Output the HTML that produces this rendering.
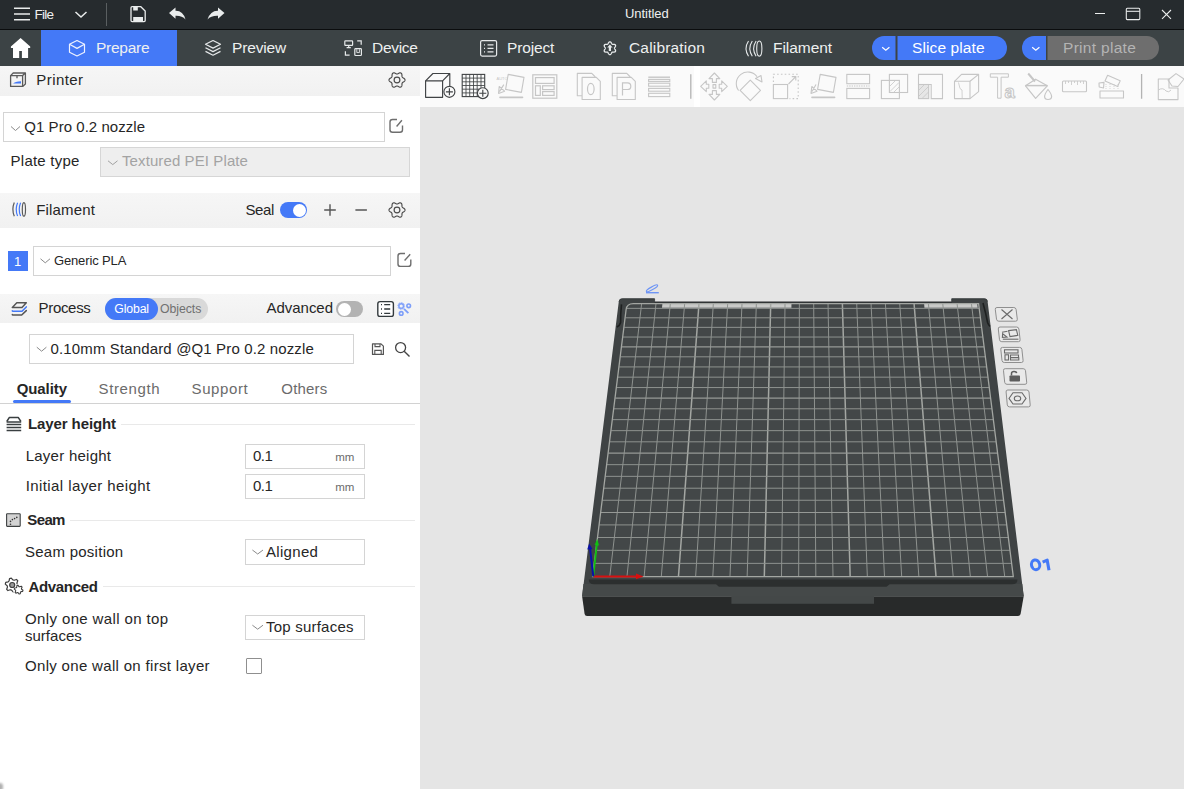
<!DOCTYPE html>
<html><head><meta charset="utf-8">
<style>
*{box-sizing:border-box;margin:0;padding:0}
html,body{width:1184px;height:789px;overflow:hidden;background:#fff;font-family:"Liberation Sans",sans-serif;color:#262626}
.a{position:absolute}
.t{position:absolute;white-space:nowrap}
svg{position:absolute;overflow:visible}
#title{left:0;top:0;width:1184px;height:29px;background:#262b2e}
#tline{left:0;top:29px;width:1184px;height:1px;background:#0b0d0e}
#tabs{left:0;top:30px;width:1184px;height:36px;background:#3c4345}
.tt{position:absolute;top:38px;height:20px;color:#eef0f0;font-size:15px;line-height:20px;white-space:nowrap}
</style></head><body>
<div class="a" style="left:420px;top:66px;width:764px;height:41px;background:#fafafa"></div>
<div class="a" style="left:420px;top:107px;width:764px;height:682px;background:#e5e5e5"></div>
<svg style="left:0;top:0" width="1184" height="789" viewBox="0 0 1184 789">
<path d="M582.1 596.2H1023.7L1020.6 614Q1020 616 1018 616H587Q585 616 584.6 614Z" fill="#282a2a"/>
<path d="M582.1 596.2L618.8 301.5Q619.3 298.6 622.3 298.6H654.6V302H951.7V298.6H984.5Q987.2 298.6 987.6 301.5L1023.7 596.2Z" fill="#3f4344"/>
<path d="M654.6 302.2H951.7" stroke="#2c2f30" stroke-width="1.2"/>
<path d="M619 301.6Q619.3 298.8 622.3 298.8H654.6V302.2" fill="none" stroke="#34383a" stroke-width="0.8"/>
<path d="M951.7 302.2V298.8H984.5Q987.2 298.8 987.5 301.6" fill="none" stroke="#34383a" stroke-width="0.8"/>
<path d="M583.4 584H1022.3L1023.7 596.2H582.1Z" fill="#454949"/>
<path d="M588.8 579.6H1017.4Q1017.6 584.3 1012 584.3H889.7L886.5 586.8H719L716 584.3H594Q588.8 584.3 588.8 579.6Z" fill="#2c2f2f"/>
<rect x="731.4" y="596" width="142.6" height="7.8" fill="#444848"/>
<path d="M592.60 576.60L1013.30 576.60L978.60 303.70L633.30 303.70Q626.80 303.70 626.10 309.70Z" fill="#434748"/>
<path d="M662.01 307.80L791.44 307.80L791.48 304.07L662.39 304.07Z" fill="#c9cac8"/>
<path d="M924.47 307.80L977.68 307.80L977.21 304.07L924.15 304.07Z" fill="#c9cac8"/>
<path d="M609.77 576.60L641.64 303.70" stroke="#8e928f" stroke-width="1.0"/>
<path d="M626.94 576.60L655.98 303.70" stroke="#8e928f" stroke-width="1.0"/>
<path d="M644.11 576.60L670.32 303.70" stroke="#8e928f" stroke-width="1.0"/>
<path d="M661.29 576.60L684.66 303.70" stroke="#8e928f" stroke-width="1.0"/>
<path d="M678.46 576.60L698.99 303.70" stroke="#a4a7a3" stroke-width="1.5"/>
<path d="M695.63 576.60L713.33 303.70" stroke="#8e928f" stroke-width="1.0"/>
<path d="M712.80 576.60L727.67 303.70" stroke="#8e928f" stroke-width="1.0"/>
<path d="M729.97 576.60L742.01 303.70" stroke="#8e928f" stroke-width="1.0"/>
<path d="M747.14 576.60L756.35 303.70" stroke="#8e928f" stroke-width="1.0"/>
<path d="M764.31 576.60L770.69 303.70" stroke="#a4a7a3" stroke-width="1.5"/>
<path d="M781.49 576.60L785.03 303.70" stroke="#8e928f" stroke-width="1.0"/>
<path d="M798.66 576.60L799.37 303.70" stroke="#8e928f" stroke-width="1.0"/>
<path d="M815.83 576.60L813.70 303.70" stroke="#8e928f" stroke-width="1.0"/>
<path d="M833.00 576.60L828.04 303.70" stroke="#8e928f" stroke-width="1.0"/>
<path d="M850.17 576.60L842.38 303.70" stroke="#a4a7a3" stroke-width="1.5"/>
<path d="M867.34 576.60L856.72 303.70" stroke="#8e928f" stroke-width="1.0"/>
<path d="M884.51 576.60L871.06 303.70" stroke="#8e928f" stroke-width="1.0"/>
<path d="M901.69 576.60L885.40 303.70" stroke="#8e928f" stroke-width="1.0"/>
<path d="M918.86 576.60L899.74 303.70" stroke="#8e928f" stroke-width="1.0"/>
<path d="M936.03 576.60L914.08 303.70" stroke="#a4a7a3" stroke-width="1.5"/>
<path d="M953.20 576.60L928.41 303.70" stroke="#8e928f" stroke-width="1.0"/>
<path d="M970.37 576.60L942.75 303.70" stroke="#8e928f" stroke-width="1.0"/>
<path d="M987.54 576.60L957.09 303.70" stroke="#8e928f" stroke-width="1.0"/>
<path d="M1004.71 576.60L971.43 303.70" stroke="#8e928f" stroke-width="1.0"/>
<path d="M594.28 563.37L1011.62 563.37" stroke="#8e928f" stroke-width="1.0"/>
<path d="M595.94 550.34L1009.96 550.34" stroke="#8e928f" stroke-width="1.0"/>
<path d="M597.57 537.53L1008.33 537.53" stroke="#8e928f" stroke-width="1.0"/>
<path d="M599.17 524.91L1006.73 524.91" stroke="#8e928f" stroke-width="1.0"/>
<path d="M600.75 512.49L1005.15 512.49" stroke="#969996" stroke-width="1.15"/>
<path d="M602.31 500.26L1003.59 500.26" stroke="#8e928f" stroke-width="1.0"/>
<path d="M603.84 488.21L1002.06 488.21" stroke="#8e928f" stroke-width="1.0"/>
<path d="M605.35 476.35L1000.55 476.35" stroke="#8e928f" stroke-width="1.0"/>
<path d="M606.83 464.67L999.07 464.67" stroke="#8e928f" stroke-width="1.0"/>
<path d="M608.30 453.16L997.60 453.16" stroke="#969996" stroke-width="1.15"/>
<path d="M609.74 441.82L996.16 441.82" stroke="#8e928f" stroke-width="1.0"/>
<path d="M611.16 430.65L994.74 430.65" stroke="#8e928f" stroke-width="1.0"/>
<path d="M612.56 419.64L993.34 419.64" stroke="#8e928f" stroke-width="1.0"/>
<path d="M613.94 408.79L991.96 408.79" stroke="#8e928f" stroke-width="1.0"/>
<path d="M615.30 398.10L990.60 398.10" stroke="#969996" stroke-width="1.15"/>
<path d="M616.64 387.56L989.26 387.56" stroke="#8e928f" stroke-width="1.0"/>
<path d="M617.96 377.17L987.94 377.17" stroke="#8e928f" stroke-width="1.0"/>
<path d="M619.26 366.93L986.64 366.93" stroke="#8e928f" stroke-width="1.0"/>
<path d="M620.55 356.82L985.35 356.82" stroke="#8e928f" stroke-width="1.0"/>
<path d="M621.81 346.86L984.09 346.86" stroke="#969996" stroke-width="1.15"/>
<path d="M623.06 337.04L982.84 337.04" stroke="#8e928f" stroke-width="1.0"/>
<path d="M624.29 327.35L981.61 327.35" stroke="#8e928f" stroke-width="1.0"/>
<path d="M625.51 317.79L980.39 317.79" stroke="#8e928f" stroke-width="1.0"/>
<path d="M626.71 308.37L979.19 308.37" stroke="#8e928f" stroke-width="1.0"/>
<path d="M592.60 576.60L1013.30 576.60L978.60 303.70L633.30 303.70Q626.80 303.70 626.10 309.70Z" fill="none" stroke="#a3a6a2" stroke-width="1.3"/>
<path d="M593.3 576.4H637" stroke="#d81010" stroke-width="2"/><path d="M636 573.6L643.5 576.4L636 579.2Z" fill="#d81010"/>
<path d="M593.3 576.4L597 543" stroke="#10c010" stroke-width="1.8"/><path d="M594.6 545L597.3 539L599 545.4Z" fill="#10c010"/>
<path d="M593.3 576.4L590 548" stroke="#0a10a8" stroke-width="2"/><path d="M587.2 549.5L589.2 543.5L592.4 549Z" fill="#0a10a8"/>
<path d="M621.5 304.3Q620.5 314 620.6 322.5Q620 325.5 616.8 327" fill="none" stroke="#1e2020" stroke-width="1.6"/>
<path d="M983 303Q986 314 987.6 322.5Q988.5 325.2 990 326.5" fill="none" stroke="#1e2020" stroke-width="1.6"/>
<g fill="none" stroke="#6e95f5" stroke-width="1.2"><ellipse cx="652" cy="288.3" rx="6.4" ry="1.35" transform="rotate(-29 652 288.3)"/><path d="M646 292.7H658.8" stroke-width="1.4"/></g>
<ellipse cx="1035.6" cy="564.8" rx="4.1" ry="4.9" transform="rotate(-14 1035.6 564.8)" fill="none" stroke="#4479f7" stroke-width="3"/><path d="M1042.6 562.2L1047.2 560.2L1049 570.2" fill="none" stroke="#4479f7" stroke-width="3.1" stroke-linejoin="round"/>
<path d="M997 307.5H1013.8000000000001Q1015.8000000000001 307.5 1016.1 309.5L1017.3000000000001 319.2Q1017.6 321.2 1015.6 321.2H998.8Q996.8 321.2 996.5 319.2L995.3 309.5Q995 307.5 997 307.5Z" fill="#e9e9e9" stroke="#8f8f8f" stroke-width="1"/>
<path d="M1000 327H1016.6Q1018.6 327 1018.9 329L1020.1 339.7Q1020.4 341.7 1018.4 341.7H1001.8Q999.8 341.7 999.5 339.7L998.3 329Q998 327 1000 327Z" fill="#e9e9e9" stroke="#8f8f8f" stroke-width="1"/>
<path d="M1002.5 347.4H1019.6Q1021.6 347.4 1021.9 349.4L1023.1 360.5Q1023.4 362.5 1021.4 362.5H1004.3Q1002.3 362.5 1002.0 360.5L1000.8 349.4Q1000.5 347.4 1002.5 347.4Z" fill="#e9e9e9" stroke="#8f8f8f" stroke-width="1"/>
<path d="M1005.2 368.7H1023.2Q1025.2 368.7 1025.5 370.7L1026.7 382.3Q1027 384.3 1025 384.3H1007.0Q1005.0 384.3 1004.7 382.3L1003.5 370.7Q1003.2 368.7 1005.2 368.7Z" fill="#e9e9e9" stroke="#8f8f8f" stroke-width="1"/>
<path d="M1007.8 390H1026.7Q1028.7 390 1029.0 392L1030.2 404.9Q1030.5 406.9 1028.5 406.9H1009.5999999999999Q1007.5999999999999 406.9 1007.3 404.9L1006.0999999999999 392Q1005.8 390 1007.8 390Z" fill="#e9e9e9" stroke="#8f8f8f" stroke-width="1"/>
<path d="M1001.5 309.5L1012.5 319M1012.5 309.5L1001.5 319" fill="none" stroke="#6a6a6a" stroke-width="1.1"/>
<path d="M1002.8 339.2H1018.4" fill="none" stroke="#6a6a6a" stroke-width="1.1" stroke-width="1.6"/><path d="M1008.6 330.6L1016.4 329.6L1017.8 335.4L1010 336.6Z" fill="none" stroke="#6a6a6a" stroke-width="1.1"/><path d="M1002 332.2L1007.5 331.2M1002.6 333.8L1007 337L1002.4 337.4Z" fill="none" stroke="#6a6a6a" stroke-width="1.1" stroke-width="1"/>
<rect x="1004.5" y="349.8" width="13.5" height="3.2" fill="none" stroke="#6a6a6a" stroke-width="1.1"/><rect x="1005" y="354.8" width="3.5" height="5.2" fill="none" stroke="#6a6a6a" stroke-width="1.1"/><path d="M1010.5 355H1018.5V357.5H1010.5ZM1010.5 357.8H1018.8V360H1010.5Z" fill="none" stroke="#6a6a6a" stroke-width="1.1"/>
<rect x="1009.5" y="375.5" width="10.5" height="6" rx="0.8" fill="#5c5c5c"/><path d="M1011.5 375.5V373.6Q1011.5 371.5 1014 371.5Q1016.4 371.5 1016.6 373.2" fill="none" stroke="#5c5c5c" stroke-width="1.5"/>
<path d="M1013 392.8L1022 392.8L1026 398.4L1022 404L1013 404L1009 398.4Z" fill="none" stroke="#6a6a6a" stroke-width="1.1"/><ellipse cx="1017.5" cy="398.4" rx="3.2" ry="2.4" fill="none" stroke="#6a6a6a" stroke-width="1.1"/>
</svg><div class="a" style="left:694px;top:66px;width:6px;height:41px;background:#ffffff"></div>
<svg style="left:0;top:66px" width="1184" height="41" viewBox="0 66 1184 41">
<g fill="none" stroke="#404345" stroke-width="1.15" stroke-linejoin="round"><path d="M425.6 80.8H442.6V97.3H425.6Z"/><path d="M425.6 80.8L432.9 73.5H449.8L442.6 80.8M449.8 73.5V86"/><circle cx="449.4" cy="91.8" r="5.5" fill="#fafafa"/><path d="M445.9 91.8H452.9M449.4 88.3V95.3"/></g>
<g fill="none" stroke="#404345" stroke-width="0.85"><rect x="462.2" y="74.4" width="22.5" height="22.2" stroke-width="1.1"/><path d="M466 74.4V96.6M469.7 74.4V96.6M473.5 74.4V96.6M477.2 74.4V96.6M481 74.4V96.6M462.2 78.1H484.7M462.2 81.8H484.7M462.2 85.5H484.7M462.2 89.2H484.7M462.2 92.9H484.7"/><circle cx="482.8" cy="93.2" r="5.4" fill="#fafafa" stroke-width="1.15"/><path d="M479.3 93.2H486.3M482.8 89.7V96.7" stroke-width="1.15"/></g>
<g fill="none" stroke="#c6c6c6" stroke-width="1.1" stroke-linejoin="round"><path d="M508.2 74.4L524 77.4L521.4 92.4L505.6 89.4Z"/><path d="M503.8 84.6L499.5 91.6M498.6 93.4L499.2 86.5L504.6 91.2Z"/><path d="M500 97.4H522.5" stroke-width="1.6" stroke-linecap="round"/></g>
<text x="496.5" y="80.2" font-family="Liberation Sans" font-size="4" fill="#c6c6c6">AUTO</text>
<g fill="none" stroke="#c6c6c6" stroke-width="1.2"><rect x="532.8" y="74.8" width="24" height="23.4"/><rect x="535.5" y="77.6" width="18.6" height="5.8"/><rect x="535.5" y="85.8" width="4.8" height="9.6"/><rect x="542.6" y="85.8" width="11.5" height="3.8"/><rect x="542.6" y="91.6" width="11.5" height="3.8"/></g>
<g fill="none" stroke="#c6c6c6" stroke-width="1.1" stroke-linejoin="round"><path d="M582.0 95.8H577.3 V73.4H591.8L595.3 77"/><path d="M582.0999999999999 77.4H596.3L600.3 81.4V99.5H582.0999999999999Z" fill="#fafafa"/></g>
<g fill="none" stroke="#c6c6c6" stroke-width="1.1" stroke-linejoin="round"><path d="M617.0 95.8H612.3 V73.4H626.8L630.3 77"/><path d="M617.0999999999999 77.4H631.3L635.3 81.4V99.5H617.0999999999999Z" fill="#fafafa"/></g>
<ellipse cx="590.8" cy="89" rx="3.3" ry="5.6" fill="none" stroke="#c6c6c6" stroke-width="1.2"/>
<path d="M622.5 95.6V82.8H627.5Q630.8 82.8 630.8 86.2Q630.8 89.5 627.5 89.5H622.5" fill="none" stroke="#c6c6c6" stroke-width="1.2"/>
<g fill="none" stroke="#c6c6c6" stroke-width="1.1"><path d="M648.3 77.2H670" stroke-width="1.4"/><rect x="648.6" y="79.4" width="21.2" height="2"/><rect x="648.6" y="83.2" width="21.2" height="3"/><rect x="648.6" y="88.4" width="21.2" height="2.8"/><rect x="648.6" y="93.3" width="21.2" height="3.3"/></g>
<path d="M690.8 74.2V98.7M1141.6 74V98.8" stroke="#b3b3b3" stroke-width="1.3"/>
<g fill="none" stroke="#c6c6c6" stroke-width="1.1" stroke-linejoin="round"><path d="M714.4 73L709 78.6H712.4V82.4H716.4V78.6H719.8Z"/><path d="M714.4 100L709 94.4H712.4V90.6H716.4V94.4H719.8Z"/><path d="M700.7 86.3L706.3 80.9V84.3H708.8V88.3H706.3V91.7Z"/><path d="M727.3 86.3L721.7 80.9V84.3H719.2V88.3H721.7V91.7Z"/><rect x="713" y="84.6" width="2.8" height="3.5"/></g>
<g fill="none" stroke="#c6c6c6" stroke-width="1.1" stroke-linejoin="round"><path d="M738.6 90.5A11 11 0 0 1 757 76.6"/><path d="M750.3 80.2L760.5 90.4L750.3 100.6L740.1 90.4Z"/><path d="M755.5 78.5L761 75.6L762 81.9Z"/></g>
<g fill="none" stroke="#c6c6c6" stroke-width="1.1"><rect x="773.4" y="84.5" width="14.2" height="14.1"/><path d="M773.4 82V74.3H798.2V98.6H789.5" stroke-dasharray="1.6 2.2"/><path d="M788.5 84L795.8 76.7M791.8 76.6H795.8V80.6"/></g>
<g fill="none" stroke="#c6c6c6" stroke-width="1.1" stroke-linejoin="round"><path d="M820.2 74.4L836 77.4L833.4 92.4L817.6 89.4Z"/><path d="M816 84.6L812 91.6M811 93.4L811.8 86.5L817 91.2Z"/><path d="M812 97.4H834.6" stroke-width="1.6" stroke-linecap="round"/></g>
<g fill="none" stroke="#c6c6c6" stroke-width="1.1"><rect x="846.8" y="74.4" width="22.8" height="9.3"/><rect x="846.8" y="88.4" width="22.8" height="10.2"/><path d="M846.8 86H869.6" stroke-dasharray="1.4 1"/></g>
<g fill="none" stroke="#c6c6c6" stroke-width="1.1"><rect x="881.4" y="80.4" width="18" height="18.2"/><rect x="889.4" y="74.4" width="18.2" height="18.1"/><path d="M890 86L895 81M890 91.5L899 82.5M894 92L899 87" stroke-width="0.8"/></g>
<g fill="none" stroke="#c6c6c6" stroke-width="1.1"><path d="M918.5 74.4H942.5V98.6H931.2V84.5H918.5Z"/><rect x="918.5" y="84.5" width="10.2" height="14.1" fill="#e6e6e6"/><path d="M919 90L924 85M919 96L928 87M922.5 98L928.5 92" stroke-width="0.8"/></g>
<g fill="none" stroke="#c6c6c6" stroke-width="1.1" stroke-linejoin="round"><path d="M954.5 81.3H970V98.6H954.5Z"/><path d="M954.5 81.3L961.5 74.4H978.6L970 81.3M978.6 74.4V91.6L970 98.6"/><path d="M958.5 82.5L960 88.5L962 90L962.2 98" stroke-width="0.8"/></g>
<path d="M990.3 73.8H1008.4V77.2H1001.1V98.2H997.6V77.2H990.3Z" fill="none" stroke="#c6c6c6" stroke-width="1"/>
<text x="1004.4" y="98.4" font-family="Liberation Sans" font-weight="bold" font-size="18.5" fill="#fafafa" stroke="#c6c6c6" stroke-width="1">a</text>
<g fill="none" stroke="#c6c6c6" stroke-width="1.2" stroke-linejoin="round"><path d="M1035.6 79.2L1047.3 85.8L1035.6 98.3L1025.5 85.8Z"/><path d="M1025.5 85.6H1047.4" stroke-width="1.5"/><path d="M1028.2 73.5L1035 81.5" stroke-width="2"/><path d="M1048 89.5Q1044.6 94 1044.6 96.5Q1044.6 99.5 1048 99.5Q1051.6 99.5 1051.6 96.5Q1051.6 94 1048 89.5Z"/></g>
<g fill="none" stroke="#c6c6c6" stroke-width="1.1"><rect x="1062.5" y="81" width="24" height="10.8" rx="1"/><path d="M1065.5 81V84M1068.5 81V83M1071.5 81V85M1074.5 81V83M1077.5 81V85M1080.5 81V83M1083.5 81V84" stroke-width="0.8"/></g>
<g fill="none" stroke="#c6c6c6" stroke-width="1.1" stroke-linejoin="round"><rect x="1100" y="91" width="23.5" height="7"/><path d="M1107.6 75.3L1120.2 80.8L1117.6 86.4L1105 81Z"/><path d="M1099 83L1104 82.4L1103.5 88L1099.2 87Z"/><path d="M1106 84V90M1110 84V90M1114 84V90M1118 84V90" stroke-width="0.7" stroke-dasharray="1 1"/></g>
<g fill="none" stroke="#c6c6c6" stroke-width="1.1" stroke-linejoin="round"><path d="M1158.3 79H1169V88H1178V99.6H1158.3Z"/><path d="M1168 80L1176 73.6L1184 79L1178 86.5L1172 86Z"/><path d="M1158.3 90Q1163 87 1166 91Q1169 93 1171 90" stroke-width="0.9"/></g>
</svg><!-- title bar -->
<div id="title" class="a"></div>
<div id="tline" class="a"></div>
<svg style="left:0;top:0" width="240" height="29" viewBox="0 0 240 29">
  <g stroke="#e9ecec" stroke-width="1.6" fill="none">
    <path d="M14 8.2H30M14 14H30M14 19.8H30"/>
    <path d="M75.5 12L81 17L86.5 12" stroke-width="1.5"/>
  </g>
  <path d="M106.5 3V26" stroke="#5a5f61" stroke-width="1"/>
  <!-- save -->
  <path d="M131 7.8Q131 6.7 132.1 6.7H140.8L145.2 11.1V20.6Q145.2 21.7 144.1 21.7H132.1Q131 21.7 131 20.6Z" fill="none" stroke="#e9ecec" stroke-width="1.3"/>
  <rect x="133.2" y="6.7" width="4.6" height="3.8" fill="#e9ecec"/>
  <rect x="133.2" y="17" width="9.8" height="4.5" fill="#e9ecec"/>
  <!-- undo -->
  <path d="M169 13L175.5 7.5V10.8Q183 10.5 185.5 19.5Q182 15.5 175.5 15.8V18.8Z" fill="#e9ecec"/>
  <!-- redo -->
  <path d="M224.5 13L218 7.5V10.8Q210.5 10.5 207.5 19.5Q211 15.5 218 15.8V18.8Z" fill="#e9ecec"/>
</svg>
<div class="a" style="left:34.5px;top:7px;font-size:13.5px;line-height:16px;color:#eef0f0;letter-spacing:-0.75px">File</div>
<div class="a" style="left:625px;top:6px;font-size:13px;line-height:16px;color:#eef0f0;letter-spacing:-0.05px">Untitled</div>
<svg style="left:1080px;top:0" width="104" height="29" viewBox="1080 0 104 29">
  <g stroke="#eceeee" stroke-width="1.05" fill="none">
    <path d="M1095 13.5H1105"/>
    <rect x="1126.3" y="8.3" width="13.5" height="11.3" rx="1"/>
    <path d="M1126.3 11.3H1139.8"/>
    <path d="M1162 10L1171 18.8M1171 10L1162 18.8"/>
  </g>
</svg>

<!-- tabs bar -->
<div id="tabs" class="a"></div>
<div class="a" style="left:41px;top:30px;width:136px;height:36px;background:#4479f7"></div>
<svg style="left:0;top:30px" width="1184" height="36" viewBox="0 30 1184 36">
  <!-- home -->
  <path d="M20.6 38L10.9 46.6V48H13V58H19.2V51.1H21.9V58H28.1V48H30.2V46.6Z" fill="#fff"/>
  <!-- prepare cube -->
  <g fill="none" stroke="#eef2ff" stroke-width="1.2" stroke-linejoin="round">
    <path d="M77 40.5L84.5 44.3V52.2L77 56L69.5 52.2V44.3Z"/>
    <path d="M69.5 44.3L77 48.4L84.5 44.3"/>
  </g>
  <!-- preview layers -->
  <g fill="none" stroke="#e6e9ea" stroke-width="1.2" stroke-linejoin="round">
    <path d="M213 40.5L220.5 44.3L213 48.1L205.5 44.3Z"/>
    <path d="M205.5 47.8L213 51.6L220.5 47.8"/>
    <path d="M205.5 51.4L213 55.2L220.5 51.4"/>
  </g>
  <!-- device -->
  <g fill="none" stroke="#e6e9ea" stroke-width="1.2">
    <rect x="344.8" y="40.8" width="7.8" height="4.6" rx="0.6"/>
    <path d="M348.7 45.4V47.4M346.6 47.6H350.8"/>
    <path d="M357.2 40.8H361.2V44.8M345.4 51.2V55.2H349.6"/>
    <rect x="354.8" y="48.6" width="6.6" height="6.9" rx="0.8"/>
    <path d="M356.8 49.2V52.6H359.4V49.2" stroke-width="0.9"/>
  </g>
  <!-- project -->
  <g fill="none" stroke="#e6e9ea" stroke-width="1.2">
    <rect x="480.6" y="40.6" width="16" height="15.5" rx="1.5"/>
    <path d="M484 44.8H485M487.5 44.8H493.5M484 48.3H485M487.5 48.3H493.5M484 51.8H485M487.5 51.8H493.5"/>
  </g>
  <!-- calibration -->
  <path d="M614.50 48.20 L614.54 48.44 L614.65 48.70 L614.81 48.98 L615.01 49.29 L615.21 49.62 L615.40 49.99 L615.53 50.36 L615.59 50.73 L615.56 51.09 L615.44 51.40 L615.23 51.66 L614.94 51.86 L614.59 51.99 L614.19 52.07 L613.79 52.09 L613.39 52.08 L613.03 52.06 L612.70 52.06 L612.43 52.09 L612.20 52.18 L612.01 52.34 L611.84 52.56 L611.68 52.84 L611.51 53.17 L611.32 53.51 L611.10 53.85 L610.84 54.15 L610.55 54.39 L610.23 54.55 L609.90 54.60 L609.57 54.55 L609.25 54.39 L608.96 54.15 L608.70 53.85 L608.48 53.51 L608.29 53.17 L608.12 52.84 L607.96 52.56 L607.79 52.34 L607.60 52.18 L607.37 52.09 L607.10 52.06 L606.77 52.06 L606.41 52.08 L606.01 52.09 L605.61 52.07 L605.21 51.99 L604.86 51.86 L604.57 51.66 L604.36 51.40 L604.24 51.09 L604.21 50.73 L604.27 50.36 L604.40 49.99 L604.59 49.62 L604.79 49.29 L604.99 48.98 L605.15 48.70 L605.26 48.44 L605.30 48.20 L605.26 47.96 L605.15 47.70 L604.99 47.42 L604.79 47.11 L604.59 46.78 L604.40 46.41 L604.27 46.04 L604.21 45.67 L604.24 45.31 L604.36 45.00 L604.57 44.74 L604.86 44.54 L605.21 44.41 L605.61 44.33 L606.01 44.31 L606.41 44.32 L606.77 44.34 L607.10 44.34 L607.37 44.31 L607.60 44.22 L607.79 44.06 L607.96 43.84 L608.12 43.56 L608.29 43.23 L608.48 42.89 L608.70 42.55 L608.96 42.25 L609.25 42.01 L609.57 41.85 L609.90 41.80 L610.23 41.85 L610.55 42.01 L610.84 42.25 L611.10 42.55 L611.32 42.89 L611.51 43.23 L611.68 43.56 L611.84 43.84 L612.01 44.06 L612.20 44.22 L612.43 44.31 L612.70 44.34 L613.03 44.34 L613.39 44.32 L613.79 44.31 L614.19 44.33 L614.59 44.41 L614.94 44.54 L615.23 44.74 L615.44 45.00 L615.56 45.31 L615.59 45.67 L615.53 46.04 L615.40 46.41 L615.21 46.78 L615.01 47.11 L614.81 47.42 L614.65 47.70 L614.54 47.96Z" fill="none" stroke="#e6e9ea" stroke-width="1.3"/>
  <path d="M609.9 44.6L612.6 47.6H611V51H608.8V47.6H607.2Z" fill="#e6e9ea"/>
  <!-- filament -->
  <g fill="none" stroke="#e6e9ea" stroke-width="1.1">
    <path d="M748.5 41Q743.6 48.5 748.5 56.2"/>
    <path d="M752.3 41Q747.4 48.5 752.3 56.2"/>
    <path d="M756.1 41Q751.2 48.5 756.1 56.2"/>
    <ellipse cx="759.3" cy="48.6" rx="2.6" ry="7.6"/>
  </g>
  <!-- slice button -->
  <path d="M884 36H895.5V60H884A12 12 0 0 1 884 36Z" fill="#4479f7"/>
  <path d="M897.5 36H995A12 12 0 0 1 995 60H897.5Z" fill="#4479f7"/>
  <path d="M882.2 47.2L885.8 50.2L889.4 47.2" fill="none" stroke="#fff" stroke-width="1.2"/>
  <path d="M1034 36H1046V60H1034A12 12 0 0 1 1034 36Z" fill="#4479f7"/>
  <path d="M1047.5 36H1147A12 12 0 0 1 1147 60H1047.5Z" fill="#6e6e6e"/>
  <path d="M1032.2 47.2L1035.8 50.2L1039.4 47.2" fill="none" stroke="#fff" stroke-width="1.2"/>
</svg>
<div class="tt" style="left:96px;font-size:15.5px;top:37.8px;letter-spacing:-0.25px">Prepare</div>
<div class="tt" style="left:232px;font-size:15.5px;top:37.8px;letter-spacing:-0.16px">Preview</div>
<div class="tt" style="left:372px;font-size:15.5px;top:37.8px;letter-spacing:-0.31px">Device</div>
<div class="tt" style="left:507px;font-size:15.5px;top:37.8px;letter-spacing:-0.14px">Project</div>
<div class="tt" style="left:629px;font-size:15.5px;top:37.8px;letter-spacing:0.17px">Calibration</div>
<div class="tt" style="left:773px;font-size:15.5px;top:37.8px;letter-spacing:-0.05px">Filament</div>
<div class="tt" style="left:912px;color:#fff;font-size:15.5px;letter-spacing:0.1px">Slice plate</div>
<div class="tt" style="left:1063px;color:#b4b4b4;font-size:15.5px;letter-spacing:0.3px">Print plate</div>


<div class="a" style="left:0px;top:66px;width:420px;height:723px;background:#fff;"></div>
<div class="a" style="left:0px;top:66px;width:420px;height:30px;background:linear-gradient(#f6f6f6,#f1f1f1);"></div>
<div class="a" style="left:0px;top:192.6px;width:420px;height:35.400000000000006px;background:linear-gradient(#f6f6f6,#f1f1f1);"></div>
<div class="a" style="left:0px;top:294px;width:420px;height:29px;background:linear-gradient(#f6f6f6,#f1f1f1);"></div>
<div class="t" style="left:36.3px;top:72.00px;font-size:15px;line-height:15px;color:#262626;letter-spacing:0.44px;">Printer</div>
<div class="a" style="left:3px;top:112px;width:382px;height:30px;background:#fff;border:1px solid #d4d4d4;"></div>
<div class="t" style="left:24.3px;top:119.20px;font-size:15px;line-height:15px;color:#262626;letter-spacing:0.04px;">Q1 Pro 0.2 nozzle</div>
<div class="t" style="left:10.6px;top:153.30px;font-size:15px;line-height:15px;color:#262626;letter-spacing:0.23px;">Plate type</div>
<div class="a" style="left:100px;top:147px;width:310px;height:30px;background:#eeeeee;border:1px solid #d6d6d6;"></div>
<div class="t" style="left:122px;top:153.30px;font-size:15px;line-height:15px;color:#a3a3a3;letter-spacing:0.1px;">Textured PEI Plate</div>
<div class="t" style="left:36.2px;top:202.30px;font-size:15px;line-height:15px;color:#262626;letter-spacing:0.16px;">Filament</div>
<div class="t" style="left:245.5px;top:202.30px;font-size:15px;line-height:15px;color:#262626;letter-spacing:-0.4px;">Seal</div>
<div class="a" style="left:280px;top:202px;width:27px;height:16px;background:#4479f7;border-radius:8px;"></div>
<div class="a" style="left:292.5px;top:203.5px;width:13.0px;height:13.0px;background:#fff;border-radius:7px;"></div>
<div class="a" style="left:8px;top:251px;width:20px;height:20px;background:#4479f7;"></div>
<div class="t" style="left:14px;top:254.50px;font-size:13px;line-height:13px;color:#fff;letter-spacing:0px;">1</div>
<div class="a" style="left:33px;top:246px;width:358px;height:30px;background:#fff;border:1px solid #d4d4d4;"></div>
<div class="t" style="left:53.9px;top:253.70px;font-size:13px;line-height:13px;color:#262626;letter-spacing:-0.12px;">Generic PLA</div>
<div class="t" style="left:38.5px;top:300.00px;font-size:15px;line-height:15px;color:#262626;letter-spacing:-0.31px;">Process</div>
<div class="a" style="left:105px;top:298px;width:102.5px;height:21.5px;background:#d9d9d9;border-radius:11px;"></div>
<div class="a" style="left:105px;top:298px;width:52.599999999999994px;height:21.5px;background:#4479f7;border-radius:11px;"></div>
<div class="t" style="left:114.3px;top:302.89px;font-size:12.3px;line-height:12.3px;color:#fff;letter-spacing:-0.16px;">Global</div>
<div class="t" style="left:160px;top:302.89px;font-size:12.3px;line-height:12.3px;color:#707070;letter-spacing:-0.05px;">Objects</div>
<div class="t" style="left:266.5px;top:300.00px;font-size:15px;line-height:15px;color:#262626;letter-spacing:-0.03px;">Advanced</div>
<div class="a" style="left:336px;top:301px;width:27px;height:16px;background:#b3b3b3;border-radius:8px;"></div>
<div class="a" style="left:337.5px;top:302.5px;width:13.0px;height:13.0px;background:#fff;border-radius:7px;"></div>
<div class="a" style="left:29px;top:334px;width:325px;height:30px;background:#fff;border:1px solid #d4d4d4;"></div>
<div class="t" style="left:50.5px;top:341.10px;font-size:15px;line-height:15px;color:#262626;letter-spacing:0.14px;">0.10mm Standard @Q1 Pro 0.2 nozzle</div>
<div class="t" style="left:16.7px;top:381.00px;font-size:15px;line-height:15px;color:#262626;font-weight:bold;letter-spacing:-0.08px;">Quality</div>
<div class="t" style="left:98.6px;top:381.00px;font-size:15px;line-height:15px;color:#6b6b6b;letter-spacing:0.62px;">Strength</div>
<div class="t" style="left:191.6px;top:381.00px;font-size:15px;line-height:15px;color:#6b6b6b;letter-spacing:0.59px;">Support</div>
<div class="t" style="left:281.3px;top:381.00px;font-size:15px;line-height:15px;color:#6b6b6b;letter-spacing:0.18px;">Others</div>
<div class="a" style="left:13px;top:400px;width:58px;height:3px;background:#4479f7;border-radius:1.5px;"></div>
<div class="a" style="left:0px;top:403px;width:420px;height:1px;background:#d2d2d2;"></div>
<div class="t" style="left:28px;top:416.30px;font-size:15px;line-height:15px;color:#262626;font-weight:bold;letter-spacing:-0.1px;">Layer height</div>
<div class="a" style="left:121px;top:424px;width:294px;height:1px;background:#e9e9e9;"></div>
<div class="t" style="left:25.7px;top:448.30px;font-size:15px;line-height:15px;color:#262626;letter-spacing:0.25px;">Layer height</div>
<div class="a" style="left:245px;top:444px;width:120px;height:25px;background:#fff;border:1px solid #d4d4d4;"></div>
<div class="t" style="left:253px;top:448.30px;font-size:15px;line-height:15px;color:#262626;letter-spacing:-0.49px;">0.1</div>
<div class="t" style="left:335.2px;top:452.27px;font-size:11.5px;line-height:11.5px;color:#6b6b6b;letter-spacing:0px;">mm</div>
<div class="t" style="left:25.7px;top:478.10px;font-size:15px;line-height:15px;color:#262626;letter-spacing:0.41px;">Initial layer height</div>
<div class="a" style="left:245px;top:473.5px;width:120px;height:25.0px;background:#fff;border:1px solid #d4d4d4;"></div>
<div class="t" style="left:253px;top:478.10px;font-size:15px;line-height:15px;color:#262626;letter-spacing:-0.49px;">0.1</div>
<div class="t" style="left:335.2px;top:482.07px;font-size:11.5px;line-height:11.5px;color:#6b6b6b;letter-spacing:0px;">mm</div>
<div class="t" style="left:27.3px;top:512.20px;font-size:15px;line-height:15px;color:#262626;font-weight:bold;letter-spacing:-0.63px;">Seam</div>
<div class="a" style="left:70px;top:520px;width:345px;height:1px;background:#e9e9e9;"></div>
<div class="t" style="left:25px;top:544.10px;font-size:15px;line-height:15px;color:#262626;letter-spacing:0.26px;">Seam position</div>
<div class="a" style="left:245px;top:539px;width:120px;height:25.5px;background:#fff;border:1px solid #d4d4d4;"></div>
<div class="t" style="left:266px;top:544.10px;font-size:15px;line-height:15px;color:#262626;letter-spacing:0.31px;">Aligned</div>
<div class="t" style="left:28.4px;top:578.60px;font-size:15px;line-height:15px;color:#262626;font-weight:bold;letter-spacing:-0.31px;">Advanced</div>
<div class="a" style="left:103px;top:586px;width:312px;height:1px;background:#e9e9e9;"></div>
<div class="t" style="left:25px;top:610.50px;font-size:15px;line-height:15px;color:#262626;letter-spacing:0.38px;">Only one wall on top</div>
<div class="t" style="left:25px;top:627.50px;font-size:15px;line-height:15px;color:#262626;letter-spacing:0.01px;">surfaces</div>
<div class="a" style="left:245px;top:614.5px;width:120px;height:25.0px;background:#fff;border:1px solid #d4d4d4;"></div>
<div class="t" style="left:266px;top:619.30px;font-size:15px;line-height:15px;color:#262626;letter-spacing:0.22px;">Top surfaces</div>
<div class="t" style="left:25px;top:658.40px;font-size:15px;line-height:15px;color:#262626;letter-spacing:0.32px;">Only one wall on first layer</div>
<div class="a" style="left:246px;top:658px;width:16px;height:16px;background:#fff;border:1px solid #8f8f8f;border-radius:1px;"></div>
<div class="a" style="left:-3px;top:783px;width:6px;height:8px;border-radius:3px;background:#b0b0b0;filter:blur(1px)"></div><!-- blob --><svg style="left:0;top:0" width="1184" height="789" viewBox="0 0 1184 789">
<g fill="none" stroke="#5a5a5a" stroke-width="1.3" stroke-linejoin="round"><path d="M10.6 75.6H22.6V86.4H10.6Z"/><path d="M10.6 75.6L13.2 73H25.4V84L22.6 86.4M22.6 75.6L25.4 73"/><path d="M17 75.6V78.2"/></g>
<path d="M12.8 83.8Q15 81.3 21 81.3V83.4H12.8Z" fill="#4479f7"/>
<path d="M405.00 80.00 L404.94 80.42 L404.77 80.82 L404.49 81.19 L404.15 81.52 L403.76 81.81 L403.36 82.07 L402.99 82.30 L402.66 82.52 L402.39 82.75 L402.20 83.00 L402.07 83.29 L402.01 83.64 L401.98 84.04 L401.97 84.48 L401.95 84.95 L401.89 85.43 L401.78 85.90 L401.59 86.32 L401.33 86.67 L401.00 86.93 L400.61 87.08 L400.18 87.13 L399.72 87.08 L399.26 86.95 L398.81 86.76 L398.39 86.54 L398.00 86.33 L397.65 86.16 L397.32 86.04 L397.00 86.00 L396.68 86.04 L396.35 86.16 L396.00 86.33 L395.61 86.54 L395.19 86.76 L394.74 86.95 L394.28 87.08 L393.82 87.13 L393.39 87.08 L393.00 86.93 L392.67 86.67 L392.41 86.32 L392.22 85.90 L392.11 85.43 L392.05 84.95 L392.03 84.48 L392.02 84.04 L391.99 83.64 L391.93 83.29 L391.80 83.00 L391.61 82.75 L391.34 82.52 L391.01 82.30 L390.64 82.07 L390.24 81.81 L389.85 81.52 L389.51 81.19 L389.23 80.82 L389.06 80.42 L389.00 80.00 L389.06 79.58 L389.23 79.18 L389.51 78.81 L389.85 78.48 L390.24 78.19 L390.64 77.93 L391.01 77.70 L391.34 77.48 L391.61 77.25 L391.80 77.00 L391.93 76.71 L391.99 76.36 L392.02 75.96 L392.03 75.52 L392.05 75.05 L392.11 74.57 L392.22 74.10 L392.41 73.68 L392.67 73.33 L393.00 73.07 L393.39 72.92 L393.82 72.87 L394.28 72.92 L394.74 73.05 L395.19 73.24 L395.61 73.46 L396.00 73.67 L396.35 73.84 L396.68 73.96 L397.00 74.00 L397.32 73.96 L397.65 73.84 L398.00 73.67 L398.39 73.46 L398.81 73.24 L399.26 73.05 L399.72 72.92 L400.18 72.87 L400.61 72.92 L401.00 73.07 L401.33 73.33 L401.59 73.68 L401.78 74.10 L401.89 74.57 L401.95 75.05 L401.97 75.52 L401.98 75.96 L402.01 76.36 L402.07 76.71 L402.20 77.00 L402.39 77.25 L402.66 77.48 L402.99 77.70 L403.36 77.93 L403.76 78.19 L404.15 78.48 L404.49 78.81 L404.77 79.18 L404.94 79.58Z" fill="none" stroke="#4a4a4a" stroke-width="1.15" stroke-linejoin="round"/><circle cx="397" cy="80" r="2.9" fill="none" stroke="#4a4a4a" stroke-width="1.15"/>
<path d="M397 119.5H392.5Q390 119.5 390 122.0V129.7Q390 132.2 392.5 132.2H400.0Q402.5 132.2 402.5 129.7V125.5" fill="none" stroke="#6e6e6e" stroke-width="1.4"/><path d="M396.6 126.5 L401.9 120.3" stroke="#6e6e6e" stroke-width="1.4"/>
<path d="M11 126.5L15.5 130.5L20 126.5" fill="none" stroke="#8a8a8a" stroke-width="1"/>
<path d="M108 160.8L112.75 164.60000000000002L117.5 160.8" fill="none" stroke="#a0a0a0" stroke-width="1"/>
<g fill="none" stroke-width="1.2"><path d="M14.3 202.6Q11.4 209.5 14.3 216.2" stroke="#5a5a5a"/><path d="M17.6 202.8Q14.8 209.5 17.6 216" stroke="#4479f7"/><path d="M20.6 202.8Q17.8 209.5 20.6 216" stroke="#4479f7"/><ellipse cx="23.9" cy="209.4" rx="1.6" ry="6.8" stroke="#5a5a5a"/></g>
<path d="M324.2 210H335.8M330 204.2V215.8M355.4 210H366.9" stroke="#555" stroke-width="1.4"/>
<path d="M405.00 210.00 L404.94 210.42 L404.77 210.82 L404.49 211.19 L404.15 211.52 L403.76 211.81 L403.36 212.07 L402.99 212.30 L402.66 212.52 L402.39 212.75 L402.20 213.00 L402.07 213.29 L402.01 213.64 L401.98 214.04 L401.97 214.48 L401.95 214.95 L401.89 215.43 L401.78 215.90 L401.59 216.32 L401.33 216.67 L401.00 216.93 L400.61 217.08 L400.18 217.13 L399.72 217.08 L399.26 216.95 L398.81 216.76 L398.39 216.54 L398.00 216.33 L397.65 216.16 L397.32 216.04 L397.00 216.00 L396.68 216.04 L396.35 216.16 L396.00 216.33 L395.61 216.54 L395.19 216.76 L394.74 216.95 L394.28 217.08 L393.82 217.13 L393.39 217.08 L393.00 216.93 L392.67 216.67 L392.41 216.32 L392.22 215.90 L392.11 215.43 L392.05 214.95 L392.03 214.48 L392.02 214.04 L391.99 213.64 L391.93 213.29 L391.80 213.00 L391.61 212.75 L391.34 212.52 L391.01 212.30 L390.64 212.07 L390.24 211.81 L389.85 211.52 L389.51 211.19 L389.23 210.82 L389.06 210.42 L389.00 210.00 L389.06 209.58 L389.23 209.18 L389.51 208.81 L389.85 208.48 L390.24 208.19 L390.64 207.93 L391.01 207.70 L391.34 207.48 L391.61 207.25 L391.80 207.00 L391.93 206.71 L391.99 206.36 L392.02 205.96 L392.03 205.52 L392.05 205.05 L392.11 204.57 L392.22 204.10 L392.41 203.68 L392.67 203.33 L393.00 203.07 L393.39 202.92 L393.82 202.87 L394.28 202.92 L394.74 203.05 L395.19 203.24 L395.61 203.46 L396.00 203.67 L396.35 203.84 L396.68 203.96 L397.00 204.00 L397.32 203.96 L397.65 203.84 L398.00 203.67 L398.39 203.46 L398.81 203.24 L399.26 203.05 L399.72 202.92 L400.18 202.87 L400.61 202.92 L401.00 203.07 L401.33 203.33 L401.59 203.68 L401.78 204.10 L401.89 204.57 L401.95 205.05 L401.97 205.52 L401.98 205.96 L402.01 206.36 L402.07 206.71 L402.20 207.00 L402.39 207.25 L402.66 207.48 L402.99 207.70 L403.36 207.93 L403.76 208.19 L404.15 208.48 L404.49 208.81 L404.77 209.18 L404.94 209.58Z" fill="none" stroke="#4a4a4a" stroke-width="1.15" stroke-linejoin="round"/><circle cx="397" cy="210" r="2.9" fill="none" stroke="#4a4a4a" stroke-width="1.15"/>
<path d="M40.5 258.8L45.25 262.8L50.0 258.8" fill="none" stroke="#8a8a8a" stroke-width="1"/>
<path d="M405 253.5H400.5Q398 253.5 398 256.0V263.9Q398 266.4 400.5 266.4H408.3Q410.8 266.4 410.8 263.9V259.5" fill="none" stroke="#6e6e6e" stroke-width="1.4"/><path d="M404.6 260.5 L410.2 254.3" stroke="#6e6e6e" stroke-width="1.4"/>
<g fill="none" stroke-width="1.5" stroke-linejoin="round" stroke-linecap="round"><path d="M12.3 307.4L16.8 302.8H26.3L22 307.4Z" stroke="#555"/><path d="M12.3 310.8Q12.3 311.3 13 311.3H22L26.3 306.9" stroke="#4479f7"/><path d="M12.3 314.4Q12.3 315 13 315H21.7L26.3 310.6" stroke="#555"/></g>
<rect x="377.8" y="301.6" width="15.6" height="14.8" rx="2.2" fill="#fff" stroke="#333a3d" stroke-width="1.4"/>
<path d="M381 304.6H382M384.2 304.6H390.2M381 309H382M384.2 309H390.2M381 313.4H382M384.2 313.4H390.2" stroke="#333a3d" stroke-width="1.3"/>
<g fill="none" stroke="#7d9ef9" stroke-width="1.6"><circle cx="401.2" cy="306" r="2.4"/><circle cx="408.7" cy="305.8" r="1.8"/><circle cx="401.2" cy="313.4" r="1.8"/><path d="M404 308.8L408.4 313.2" stroke-width="1.8"/></g>
<path d="M404.78 306.35 L404.64 307.05 L403.67 307.32 L403.36 307.78 L403.48 308.78 L402.90 309.17 L402.01 308.68 L401.47 308.79 L400.85 309.58 L400.15 309.44 L399.88 308.47 L399.42 308.16 L398.42 308.28 L398.03 307.70 L398.52 306.81 L398.41 306.27 L397.62 305.65 L397.76 304.95 L398.73 304.68 L399.04 304.22 L398.92 303.22 L399.50 302.83 L400.39 303.32 L400.93 303.21 L401.55 302.42 L402.25 302.56 L402.52 303.53 L402.98 303.84 L403.98 303.72 L404.37 304.30 L403.88 305.19 L403.99 305.73Z" fill="none" stroke="#9fb8fa" stroke-width="0.7" stroke-linejoin="round"/>
<path d="M36.8 347.2L41.599999999999994 351.2L46.4 347.2" fill="none" stroke="#8a8a8a" stroke-width="1"/>
<path d="M372.5 343.8H381L383.4 346.2V354.4H372.5Z" fill="none" stroke="#555" stroke-width="1.2" stroke-linejoin="round"/>
<path d="M375 344V346.6H380V344M374.8 354.2V350.4H381.2V354.2" fill="none" stroke="#555" stroke-width="1.1"/>
<circle cx="400.6" cy="347.6" r="5" fill="none" stroke="#444" stroke-width="1.3"/><path d="M404.2 351.2L409.5 356.5" stroke="#444" stroke-width="1.4"/>
<g fill="none" stroke="#3a3f41" stroke-width="1.5" stroke-linejoin="round"><path d="M6.8 421.5L9.4 417.4H18.2L20.9 421.5"/><path d="M6.6 421.9H21.2M6.6 424.6H21.2M6.6 427.5H21.2M6.6 430.4H21.2"/></g>
<rect x="6.6" y="513.7" width="13.6" height="12.7" rx="0.6" fill="#d3d3d3" stroke="#3d4041" stroke-width="1.1"/>
<circle cx="10.5" cy="524.3" r="0.8" fill="#333"/>
<circle cx="10.5" cy="521.4" r="0.8" fill="#333"/>
<circle cx="12.4" cy="519.6" r="0.8" fill="#333"/>
<circle cx="14.6" cy="518.6" r="0.8" fill="#333"/>
<circle cx="16.8" cy="517.4" r="0.8" fill="#333"/>
<defs><clipPath id="cg"><path d="M0 0H30V600H0Z M18.6 589.7m-5.6 0a5.6 5.6 0 1 0 11.2 0a5.6 5.6 0 1 0 -11.2 0" clip-rule="evenodd"/></clipPath></defs>
<g clip-path="url(#cg)"><path d="M19.14 585.91 L18.67 587.68 L16.25 588.10 L15.30 589.05 L14.88 591.47 L13.11 591.94 L11.53 590.06 L10.25 589.71 L7.94 590.55 L6.65 589.26 L7.49 586.95 L7.14 585.67 L5.26 584.09 L5.73 582.32 L8.15 581.90 L9.10 580.95 L9.52 578.53 L11.29 578.06 L12.87 579.94 L14.15 580.29 L16.46 579.45 L17.75 580.74 L16.91 583.05 L17.26 584.33Z" fill="none" stroke="#3f3f3f" stroke-width="1.2" stroke-linejoin="round"/></g>
<circle cx="12.2" cy="585" r="2.5" fill="#9a9a9a" stroke="#3f3f3f" stroke-width="1.2"/>
<path d="M22.96 590.27 L22.67 591.38 L21.06 591.59 L20.49 592.16 L20.28 593.77 L19.17 594.06 L18.20 592.77 L17.41 592.56 L15.92 593.19 L15.11 592.38 L15.74 590.89 L15.53 590.10 L14.24 589.13 L14.53 588.02 L16.14 587.81 L16.71 587.24 L16.92 585.63 L18.03 585.34 L19.00 586.63 L19.79 586.84 L21.28 586.21 L22.09 587.02 L21.46 588.51 L21.67 589.30Z" fill="none" stroke="#3f3f3f" stroke-width="1.1" stroke-linejoin="round"/>
<path d="M252.4 550L257.7 554L263.0 550" fill="none" stroke="#8a8a8a" stroke-width="1"/>
<path d="M252.4 625.2L257.7 629.2L263.0 625.2" fill="none" stroke="#8a8a8a" stroke-width="1"/>
</svg></body></html>
